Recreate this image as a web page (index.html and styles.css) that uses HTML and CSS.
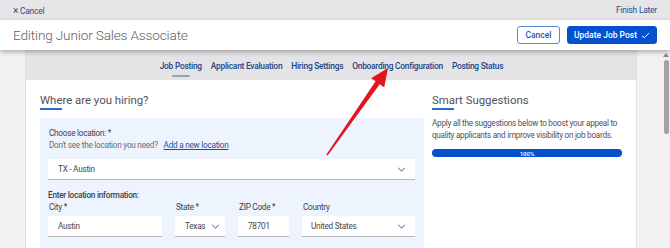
FILE: index.html
```html
<!DOCTYPE html>
<html>
<head>
<meta charset="utf-8">
<link rel="stylesheet" href="styles.css">
</head>
<body>
<div class="topbar">
  <a class="top-cancel"><span class="x">×</span> Cancel</a>
  <a class="finish">Finish Later</a>
</div>
<header class="header">
  <h1 class="title">Editing Junior Sales Associate</h1>
  <div class="actions">
    <button class="btn btn-outline">Cancel</button>
    <button class="btn btn-primary">Update Job Post <svg class="check" viewBox="0 0 10 8" width="9" height="7"><path d="M1 4.2 L3.6 6.6 L9 1.2" fill="none" stroke="#fff" stroke-width="1.1"/></svg></button>
  </div>
</header>
<div class="page">
  <div class="gutter"></div>
  <main class="panel">
    <nav class="tabs">
      <a class="tab active">Job Posting</a>
      <a class="tab">Applicant Evaluation</a>
      <a class="tab">Hiring Settings</a>
      <a class="tab">Onboarding Configuration</a>
      <a class="tab">Posting Status</a>
    </nav>
    <div class="content">
      <section class="main-col">
        <h2 class="section-title">Where are you hiring?</h2>
        <div class="loc-box">
          <div class="label">Choose location: *</div>
          <div class="hint">Don't see the location you need? <a class="link">Add a new location</a></div>
          <div class="field select wide"><span>TX - Austin</span><svg class="chev" viewBox="0 0 10 6" width="9" height="5"><path d="M1 1 L5 5 L9 1" fill="none" stroke="#44577f" stroke-width="1.2"/></svg></div>
          <div class="label bold">Enter location information:</div>
          <div class="row">
            <div class="col city"><div class="label">City *</div><div class="field"><span>Austin</span></div></div>
            <div class="col state"><div class="label">State *</div><div class="field select"><span>Texas</span><svg class="chev" viewBox="0 0 10 6" width="9" height="5"><path d="M1 1 L5 5 L9 1" fill="none" stroke="#44577f" stroke-width="1.2"/></svg></div></div>
            <div class="col zip"><div class="label">ZIP Code *</div><div class="field"><span>78701</span></div></div>
            <div class="col country"><div class="label">Country</div><div class="field select"><span>United States</span><svg class="chev" viewBox="0 0 10 6" width="9" height="5"><path d="M1 1 L5 5 L9 1" fill="none" stroke="#44577f" stroke-width="1.2"/></svg></div></div>
          </div>
        </div>
      </section>
      <aside class="side">
        <h2 class="section-title">Smart Suggestions</h2>
        <p class="side-text">Apply all the suggestions below to boost your appeal to quality applicants and improve visibility on job boards.</p>
        <div class="progress"><span>100%</span></div>
      </aside>
    </div>
  </main>
  <div class="right-gutter"></div>
  <div class="scrollbar"><div class="sb-arrow"></div><div class="sb-thumb"></div></div>
</div>
<svg class="annot" width="670" height="248" viewBox="0 0 670 248">
  <polygon points="326.4,154.6 375.6,81.3 371.1,78.2 388,68 384.2,87.4 379.7,84.2 327.6,155.4" fill="#e3151c"/>
</svg>
</body>
</html>
```
FILE: styles.css
```css
* { box-sizing: border-box; }
html, body { margin: 0; padding: 0; }
body {
  width: 670px;
  height: 248px;
  overflow: hidden;
  font-family: Roboto, "Liberation Sans", sans-serif;
  background: #f2f2f2;
  position: relative;
}
.topbar {
  height: 20px;
  background: #e6e6e8;
  display: flex;
  align-items: center;
  justify-content: space-between;
  padding: 0 13px 0 13px;
  font-size: 8.4px;
  letter-spacing: -0.2px;
  color: #2c4a86;
}
.top-cancel .x { font-size: 10px; }
.header {
  height: 30px;
  background: #fff;
  display: flex;
  align-items: center;
  justify-content: space-between;
  padding: 0 13px;
  position: relative;
  z-index: 2;
  box-shadow: 0 2px 5px rgba(0,0,0,0.3);
}
.title {
  margin: 0;
  font-size: 13.6px;
  letter-spacing: -0.15px;
  font-weight: 300;
  color: #5f6166;
}
.actions { display: flex; gap: 7px; }
.btn {
  height: 18px;
  border-radius: 3px;
  font-family: inherit;
  font-size: 8.5px;
  font-weight: 500;
  padding: 0;
  display: flex;
  align-items: center;
  justify-content: center;
}
.btn-outline {
  width: 43px;
  background: #fff;
  border: 1px solid #5b8ad8;
  color: #1f56c0;
}
.btn-primary {
  width: 90px;
  background: #0351cf;
  border: 1px solid #0351cf;
  color: #fff;
  gap: 4px;
}
.page {
  display: flex;
  height: 198px;
}
.gutter { width: 26px; background: #f2f2f2; border-right: 1px solid #e2e2e2; }
.panel { width: 610px; display: flex; flex-direction: column; }
.right-gutter { width: 26px; background: #f2f2f2; border-left: 1px solid #e4e4e4; }
.scrollbar {
  width: 8px;
  background: #f1f1f1;
  display: flex;
  flex-direction: column;
  align-items: center;
  padding-top: 3px;
}
.sb-arrow {
  width: 0; height: 0;
  border-left: 3px solid transparent;
  border-right: 3px solid transparent;
  border-bottom: 4px solid #8a8a8a;
}
.sb-thumb {
  margin-top: 3px;
  width: 5px;
  height: 74px;
  border-radius: 3px;
  background: #a3a3a3;
}
.tabs {
  height: 32px;
  background: #e4e4e6;
  display: flex;
  justify-content: center;
  gap: 9px;
  padding-top: 11px;
  padding-left: 1px;
}
.tab {
  font-size: 8.4px;
  letter-spacing: -0.25px;
  font-weight: 500;
  color: #21448a;
  position: relative;
  height: 16px;
  line-height: 10px;
}
.tab.active::after {
  content: "";
  position: absolute;
  left: 12px;
  width: 18px;
  top: 14px;
  height: 2px;
  background: #9aa3b6;
  border-radius: 1px;
}
.content {
  flex: 1;
  background: #fff;
  display: flex;
  gap: 8px;
  padding: 13px 14px 0 14px;
}
.main-col { width: 384px; }
.side { width: 190px; }
.section-title {
  margin: 0;
  font-size: 11.4px;
  font-weight: 400;
  color: #4f5258;
  height: 16px;
  position: relative;
}
.section-title::after {
  content: "";
  position: absolute;
  left: 0;
  top: 15px;
  width: 22px;
  height: 2px;
  background: #2b6bd6;
}
.loc-box {
  margin-top: 9px;
  background: #eef4fd;
  padding: 9px 9px 10px 8px;
  height: 130px;
}
.label {
  font-size: 8.2px;
  letter-spacing: -0.25px;
  color: #3d3f44;
  line-height: 12px;
  height: 12px;
  padding-left: 1px;
}
.label.bold { font-weight: 500; margin-top: 9px; padding-left: 0; }
.hint {
  font-size: 8.2px;
  letter-spacing: -0.25px;
  color: #6a6d73;
  line-height: 12px;
  height: 12px;
  padding-left: 1px;
}
.link { color: #1e4aa8; text-decoration: underline; margin-left: 4px; }
.field {
  height: 21px;
  background: #fff;
  border-bottom: 1px solid #b4b6ba;
  display: flex;
  align-items: center;
  justify-content: space-between;
  padding: 0 9px 0 10px;
  font-size: 8.2px;
  letter-spacing: -0.25px;
  color: #45484d;
}
.field.wide { margin-top: 8px; }
.row { display: flex; gap: 13px; margin-top: 0; }
.row .label { margin-bottom: 3px; }
.col.city { width: 114px; }
.col.state { width: 50px; }
.col.state .field { padding: 0 5px 0 10px; }
.col.zip { width: 51px; }
.col.country { width: 113px; }
.col.country .field { padding-left: 9px; }
.side-text {
  margin: 8px 0 0 0;
  font-size: 8.2px;
  letter-spacing: -0.28px;
  line-height: 12px;
  color: #4f5258;
}
.progress {
  margin-top: 8px;
  height: 8px;
  background: #0351cf;
  border-radius: 4px;
  display: flex;
  align-items: center;
  justify-content: center;
  font-size: 6px;
  color: #fff;
  font-weight: 500;
}
.annot {
  position: absolute;
  left: 0;
  top: 0;
  pointer-events: none;
  z-index: 5;
}
```
